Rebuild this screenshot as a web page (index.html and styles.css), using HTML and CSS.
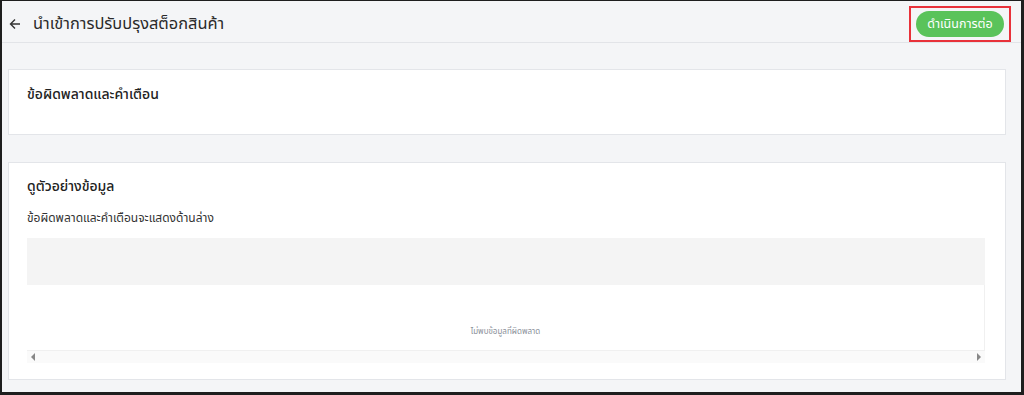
FILE: index.html
```html
<!DOCTYPE html>
<html lang="th">
<head>
<meta charset="utf-8">
<link rel="stylesheet" href="styles.css">
</head>
<body>
<div class="frame">
  <header class="topbar">
    <div class="title-wrap">
      <svg class="back" width="12" height="12" viewBox="0 0 12 12"><path d="M11 6H1.5M6 1.5L1.5 6 6 10.5" fill="none" stroke="#333" stroke-width="1.4"/></svg>
      <h1 class="title">นำเข้าการปรับปรุงสต็อกสินค้า</h1>
    </div>
    <div class="btn-outline"><button class="btn">ดำเนินการต่อ</button></div>
  </header>
  <main class="content">
    <section class="card card-errors">
      <h2 class="card-title">ข้อผิดพลาดและคำเตือน</h2>
    </section>
    <section class="card card-preview">
      <h2 class="card-title">ดูตัวอย่างข้อมูล</h2>
      <p class="sub">ข้อผิดพลาดและคำเตือนจะแสดงด้านล่าง</p>
      <div class="table">
        <div class="thead"></div>
        <div class="tbody"><span class="empty">ไม่พบข้อมูลที่ผิดพลาด</span></div>
        <div class="hscroll">
          <span class="arr arr-l"></span>
          <span class="arr arr-r"></span>
        </div>
      </div>
    </section>
  </main>
</div>
</body>
</html>
```
FILE: styles.css
```css
* { box-sizing: border-box; }
html, body { margin: 0; padding: 0; }
body {
  font-family: "Noto Sans Thai", "Noto Sans", "Liberation Sans", sans-serif;
  color: #222;
  background: #222;
}
.frame {
  width: 1024px;
  height: 395px;
  border-style: solid;
  border-color: #1e1e1e;
  border-width: 1px 3px 3px 2px;
  background: #f4f5f7;
  overflow: hidden;
}
.topbar {
  height: 42px;
  border-bottom: 1px solid #e2e4e8;
  display: flex;
  align-items: center;
  justify-content: space-between;
  padding: 5px 10px 0 7px;
}
.title-wrap { display: flex; align-items: center; gap: 12px; }
.back { display: block; }
.title {
  margin: 0;
  font-size: 16.4px;
  font-weight: 400;
  color: #2a2a2a;
  letter-spacing: 0;
}
.btn-outline {
  border: 2px solid #e8313a;
  padding: 3px 5px;
  display: flex;
}
.btn {
  font-family: inherit;
  border: 0;
  background: #5ac35a;
  color: #fff;
  font-size: 12.5px;
  height: 26px;
  width: 88px;
  border-radius: 13px;
  padding: 0;
}
.content {
  padding: 26px 15px 0 6px;
  display: flex;
  flex-direction: column;
  gap: 27px;
}
.card {
  background: #fff;
  border: 1px solid #e3e5e9;
}
.card-errors { height: 66px; padding: 14px 18px; }
.card-preview { height: 218px; padding: 13px 18px 0; }
.card-title {
  margin: 0;
  font-size: 14px;
  font-weight: 500;
  color: #222;
}
.sub {
  margin: 12px 0 0;
  font-size: 12px;
  color: #333;
}
.table {
  margin-top: 11px;
  width: 958px;
}
.thead { height: 47px; background: #f4f4f4; }
.tbody {
  height: 65px;
  display: flex;
  justify-content: center;
  align-items: flex-end;
  padding-bottom: 12px;
  border-right: 1px solid #f0f0f0;
}
.empty { font-size: 8px; color: #8a8f99; }
.hscroll {
  height: 13px;
  background: #fafafa;
  border-top: 1px solid #f0f0f0;
  display: flex;
  justify-content: space-between;
  align-items: center;
  padding: 0 4px;
}
.arr { width: 0; height: 0; border-top: 4px solid transparent; border-bottom: 4px solid transparent; }
.arr-l { border-right: 4px solid #888; }
.arr-r { border-left: 4px solid #888; }
```
